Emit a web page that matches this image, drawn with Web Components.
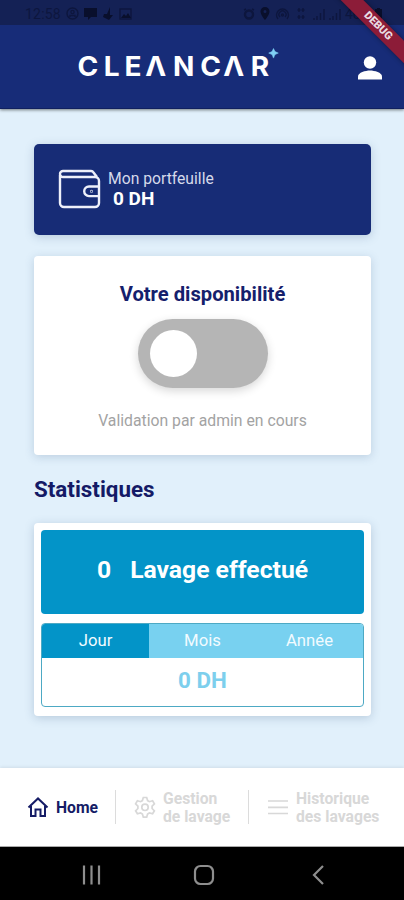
<!DOCTYPE html>
<html lang="fr">
<head>
<meta charset="utf-8">
<title>Clean Car</title>
<style>
  html, body { margin: 0; height: 100%; }
  body { font-family: Roboto, "Liberation Sans", sans-serif; overflow: hidden; }
</style>
</head>
<body>
<app-screen>
  <status-bar slot="top" time="12:58" battery="40%"></status-bar>
  <app-header slot="top"></app-header>
  <debug-banner slot="top">DEBUG</debug-banner>
  <wallet-card label="Mon portfeuille" amount="0 DH"></wallet-card>
  <availability-card>
    <span slot="title">Votre disponibilité</span>
    <span slot="note">Validation par admin en cours</span>
  </availability-card>
  <section-title>Statistiques</section-title>
  <stats-card count="0" label="Lavage effectué" amount="0 DH">
    <period-tab active>Jour</period-tab>
    <period-tab>Mois</period-tab>
    <period-tab>Année</period-tab>
  </stats-card>
  <nav-bar slot="bottom">
    <nav-item icon="home" active>Home</nav-item>
    <nav-item icon="gear">Gestion<br>de lavage</nav-item>
    <nav-item icon="menu">Historique<br>des lavages</nav-item>
  </nav-bar>
  <system-bar slot="bottom"></system-bar>
</app-screen>

<script>
class BaseElement extends HTMLElement {
    constructor() {
        super();
        this.attachShadow({mode: "open"});
    }

    connectedCallback() {
        this.shadowRoot.innerHTML = this.render();
    }

    attr(name) {
        return this.getAttribute(name) || "";
    }
}

class AppScreen extends BaseElement {
    render() {
        return `
          <style>
            :host {
              display: flex;
              flex-direction: column;
              position: relative;
              width: 404px;
              height: 900px;
              overflow: hidden;
              background: #e1f0fb;
            }
            header { box-shadow: 0 1px 3px rgba(0,0,0,0.5); }
            main {
              flex: 1;
              padding: 35px 33px 0 34px;
            }
          </style>
          <header><slot name="top"></slot></header>
          <main><slot></slot></main>
          <footer><slot name="bottom"></slot></footer>
        `;
    }
}

class StatusBar extends BaseElement {
    render() {
        return `
          <style>
            :host {
              display: flex;
              justify-content: space-between;
              align-items: center;
              box-sizing: border-box;
              height: 25px;
              padding: 2px 22px 0 25px;
              background: #142155;
              color: #0d163e;
              font-size: 14px;
            }
            div { display: flex; align-items: center; }
            .left { gap: 5px; }
            .right { gap: 4px; }
            svg { display: block; fill: none; stroke: currentColor; stroke-width: 1.4; }
            .solid { fill: #090f2c; stroke: none; }
            .time { letter-spacing: 0.2px; }
          </style>
          <div class="left">
            <span class="time">${this.attr("time")}</span>
            <svg width="13" height="13" viewBox="0 0 13 13"><circle cx="6.5" cy="6.5" r="5.5"/><circle cx="6.5" cy="5" r="1.6"/><path d="M4 10V8.500h5V10"/></svg>
            <svg class="solid" width="13" height="13" viewBox="0 0 13 13"><path d="M0 1h13v9H7l-3 3v-3H0z"/></svg>
            <svg class="solid" width="12" height="13" viewBox="0 0 12 13"><path d="M8 0v8h3l-4 5-6-3 1-3 3 0z"/></svg>
            <svg width="13" height="12" viewBox="0 0 13 12"><rect x="1" y="1" width="11" height="10"/><path class="solid" d="M2 10l3-4 2 2 2-3 3 5z"/></svg>
          </div>
          <div class="right">
            <svg width="12" height="12" viewBox="0 0 12 12"><circle cx="6" cy="6.500" r="4" stroke-width="2.400"/><path d="M1 2l2-1M11 2L9 1"/></svg>
            <svg class="solid" width="12" height="13" viewBox="0 0 12 13"><path fill-rule="evenodd" d="M6 0a4.500 4.500 0 0 0-4.500 4.500C1.500 8 6 13 6 13s4.500-5 4.500-8.500A4.500 4.500 0 0 0 6 0zm0 3a1.500 1.500 0 1 1 0 3 1.500 1.500 0 0 1 0-3z"/></svg>
            <svg width="15" height="12" viewBox="0 0 15 12"><path d="M3 11a6 6 0 1 1 9 0M5 9a3.500 3.500 0 1 1 5 0"/><circle cx="7.500" cy="7" r="1"/></svg>
            <svg width="15" height="13" viewBox="0 0 15 13"><path d="M5 1v4M9 1v4M5 8v4M9 8v4M3.500 3h3M7.500 3h3M3.500 10h3M7.500 10h3"/></svg>
            <svg width="12" height="12" viewBox="0 0 12 12"><path d="M1 12v-2M4 12V8M7.500 12V5M11 12V1"/></svg>
            <svg width="12" height="12" viewBox="0 0 12 12"><path d="M1 12v-2M4 12V8M7.500 12V5M11 12V1"/></svg>
            <span>${this.attr("battery")}</span>
            <svg class="solid" width="7" height="12" viewBox="0 0 7 12"><path d="M2 0h3v1h2v11H0V1h2z"/></svg>
          </div>
        `;
    }
}

class AppHeader extends BaseElement {
    render() {
        return `
          <style>
            :host {
              display: flex;
              align-items: center;
              justify-content: space-between;
              box-sizing: border-box;
              height: 84px;
              padding: 0 21px 0 78px;
              background: #172c78;
              color: #fff;
              border-bottom: 1px solid #10205f;
            }
            svg { display: block; }
            .logo text { font: 700 26.5px Inter, "Open Sans", sans-serif; fill: #fff; }
            .user { margin-top: 2px; }
          </style>
          <svg class="logo" width="204" height="40" viewBox="0 0 204 40">
            <text transform="scale(1.06 1)" y="29" x="-0.500 24.300 43.800 63.500 89.700 115.300 137 163">CLEΛNCΛR</text>
            <path d="M195.500 1.500l1.500 3.100 3.300 1.500-3.300 1.500-1.500 3.500-1.500-3.500-3.300-1.500 3.300-1.500z" fill="#7fd0f5" stroke="#7fd0f5" stroke-width="0.500"/>
          </svg>
          <svg class="user" width="26" height="26" viewBox="0 0 26 26" fill="#fff">
            <circle cx="13" cy="7.500" r="6.200"/>
            <path d="M1 24.500v-3c0-4 7.500-6 12-6s12 2 12 6v3z"/>
          </svg>
        `;
    }
}

class DebugBanner extends BaseElement {
    render() {
        return `
          <style>
            :host {
              position: absolute;
              top: 18px;
              left: 313px;
              width: 130px;
              height: 16px;
              line-height: 16px;
              transform: rotate(45deg);
              background: #8c1c38;
              color: #e9dbe2;
              font-size: 11px;
              font-weight: 900;
              text-align: center;
              box-shadow: 0 0 5px rgba(0,0,0,0.4);
            }
          </style>
          <slot></slot>
        `;
    }
}

class WalletCard extends BaseElement {
    render() {
        return `
          <style>
            :host {
              display: flex;
              align-items: center;
              gap: 7px;
              box-sizing: border-box;
              height: 91px;
              padding: 0 0 1px 24px;
              border-radius: 5px;
              background: #172c76;
              color: #fff;
              box-shadow: 0 2px 10px rgba(60,90,130,0.25);
            }
            svg { fill: none; stroke: #eef0fa; stroke-width: 2.4; }
            .label { font-size: 15.700px; line-height: 20px; color: #d5d9ea; }
            .amount { font-size: 19px; line-height: 20px; font-weight: 700; padding-left: 5px; }
          </style>
          <svg width="43" height="40" viewBox="0 0 43 40">
            <path d="M2 6v28a4 4 0 0 0 4 4h31a4 4 0 0 0 4-4V12a4 4 0 0 0-4-4H5a3 3 0 0 1 0-6h28a3 3 0 0 1 2.500 1.500L39 8"/>
            <path d="M41 17.500H31a4.800 4.800 0 0 0 0 9.600h10"/>
            <circle cx="33.500" cy="22.300" r="0.300"/>
          </svg>
          <div>
            <div class="label">${this.attr("label")}</div>
            <div class="amount">${this.attr("amount")}</div>
          </div>
        `;
    }
}

class ToggleSwitch extends BaseElement {
    render() {
        return `
          <style>
            :host {
              display: flex;
              align-items: center;
              box-sizing: border-box;
              width: 130px;
              height: 69px;
              padding: 0 12px;
              border-radius: 35px;
              background: #b5b5b5;
              box-shadow: 0 3px 10px rgba(0,0,0,0.16);
            }
            i { width: 47px; height: 47px; border-radius: 50%; background: #fff; }
          </style>
          <i></i>
        `;
    }
}

class AvailabilityCard extends BaseElement {
    render() {
        return `
          <style>
            :host {
              display: flex;
              flex-direction: column;
              align-items: center;
              box-sizing: border-box;
              height: 199px;
              margin-top: 21px;
              padding-top: 26px;
              border-radius: 4px;
              background: #fff;
              box-shadow: 0 2px 10px rgba(60,90,130,0.22);
            }
            .title { font-size: 20.200px; line-height: 25px; font-weight: 700; color: #15206c; }
            toggle-switch { margin-top: 12px; }
            .note { margin-top: 23px; font-size: 15.750px; line-height: 20px; color: #a3a3a3; }
          </style>
          <div class="title"><slot name="title"></slot></div>
          <toggle-switch></toggle-switch>
          <div class="note"><slot name="note"></slot></div>
        `;
    }
}

class SectionTitle extends BaseElement {
    render() {
        return `
          <style>
            :host {
              display: block;
              margin: 20px 0 19px;
              font-size: 22.400px;
              line-height: 29px;
              font-weight: 700;
              color: #141a66;
            }
          </style>
          <slot></slot>
        `;
    }
}

class StatsCard extends BaseElement {
    render() {
        return `
          <style>
            :host {
              display: flex;
              flex-direction: column;
              gap: 9px;
              box-sizing: border-box;
              height: 193px;
              padding: 7px;
              border-radius: 4px;
              background: #fff;
              box-shadow: 0 2px 10px rgba(60,90,130,0.25);
            }
            .total {
              display: flex;
              align-items: center;
              justify-content: center;
              gap: 19px;
              box-sizing: border-box;
              height: 84px;
              padding-bottom: 5px;
              border-radius: 4px;
              background: #0394c8;
              color: #fff;
              font-size: 24.700px;
              font-weight: 700;
            }
            .periods {
              box-sizing: border-box;
              height: 84px;
              border: 1px solid #4da9c4;
              border-radius: 4px;
              overflow: hidden;
            }
            .tabs {
              display: grid;
              grid-template-columns: repeat(3, 1fr);
              height: 34px;
            }
            .amount {
              line-height: 44px;
              text-align: center;
              font-size: 22.400px;
              font-weight: 700;
              color: #7dcfed;
            }
          </style>
          <div class="total"><span>${this.attr("count")}</span><span>${this.attr("label")}</span></div>
          <div class="periods">
            <div class="tabs"><slot></slot></div>
            <div class="amount">${this.attr("amount")}</div>
          </div>
        `;
    }
}

class PeriodTab extends BaseElement {
    render() {
        return `
          <style>
            :host {
              display: block;
              line-height: 34px;
              text-align: center;
              font-size: 16.700px;
              color: #f2fbff;
              background: #78d1f0;
            }
            :host([active]) { background: #0394c8; }
          </style>
          <slot></slot>
        `;
    }
}

class NavBar extends BaseElement {
    render() {
        return `
          <style>
            :host {
              display: grid;
              grid-template-columns: 115px 133px 1fr;
              align-items: center;
              height: 78px;
              background: #fff;
              box-shadow: 0 -1px 3px rgba(0,0,0,0.08);
              border-bottom: 1px solid #aaa;
            }
            ::slotted(*) { border-left: 1px solid #dcdcdc; }
            ::slotted(:first-child) { border-left-color: transparent; }
          </style>
          <slot></slot>
        `;
    }
}

const NAV_ICONS = {
    home: `<path d="M1.500 11.500L11 2.500l9.500 9M4 10v10h4.500v-6.500h5V20H18V10"/>`,
    gear: `<path d="M9.300 1.500h3.400l.9 3.100 1.800 1.100 3.200-.9 1.800 3-2.300 2.300v2.400l2.300 2.300-1.800 3-3.200-.9-1.800 1.100-.9 3.100H9.300l-.9-3.100-1.800-1.100-3.200.9-1.800-3 2.300-2.300v-2.400L1.600 7.800l1.800-3 3.200.9 1.800-1.100z"/><circle cx="11" cy="11.300" r="3.200"/>`,
    menu: `<path d="M1 5h20M1 11.300h20M1 17.500h20"/>`
};

class NavItem extends BaseElement {
    render() {
        return `
          <style>
            :host {
              display: flex;
              align-items: center;
              gap: 7px;
              box-sizing: border-box;
              height: 34px;
              padding-left: 18px;
              color: #d8d8d8;
              font-size: 15.700px;
              line-height: 18px;
              font-weight: 700;
              white-space: nowrap;
            }
            :host([active]) {
              padding-left: 26px;
              color: #151c66;
            }
            svg { flex: none; fill: none; stroke: currentColor; stroke-width: 1.7; }
            :host([active]) svg { stroke-width: 2; }
            div { padding-top: 1px; }
          </style>
          <svg width="22" height="22" viewBox="0 0 22 22">${NAV_ICONS[this.attr("icon")]}</svg>
          <div><slot></slot></div>
        `;
    }
}

class SystemBar extends BaseElement {
    render() {
        return `
          <style>
            :host {
              display: flex;
              align-items: center;
              justify-content: space-between;
              box-sizing: border-box;
              height: 53px;
              padding: 2px 74px 0 80px;
              background: #000;
            }
            svg { fill: none; stroke: #8e8e8e; stroke-width: 2.2; }
            .home { margin-right: 4px; }
          </style>
          <svg width="24" height="22" viewBox="0 0 24 22"><path d="M4 1.500v19M11.500 1.500v19M19 1.500v19"/></svg>
          <svg class="home" width="22" height="22" viewBox="0 0 22 22"><rect x="2" y="2" width="18" height="18" rx="5.500"/></svg>
          <svg width="22" height="22" viewBox="0 0 22 22"><path d="M15 2L6 11l9 9"/></svg>
        `;
    }
}

customElements.define("app-screen", AppScreen);
customElements.define("status-bar", StatusBar);
customElements.define("app-header", AppHeader);
customElements.define("debug-banner", DebugBanner);
customElements.define("wallet-card", WalletCard);
customElements.define("toggle-switch", ToggleSwitch);
customElements.define("availability-card", AvailabilityCard);
customElements.define("section-title", SectionTitle);
customElements.define("stats-card", StatsCard);
customElements.define("period-tab", PeriodTab);
customElements.define("nav-bar", NavBar);
customElements.define("nav-item", NavItem);
customElements.define("system-bar", SystemBar);
</script>
</body>
</html>
